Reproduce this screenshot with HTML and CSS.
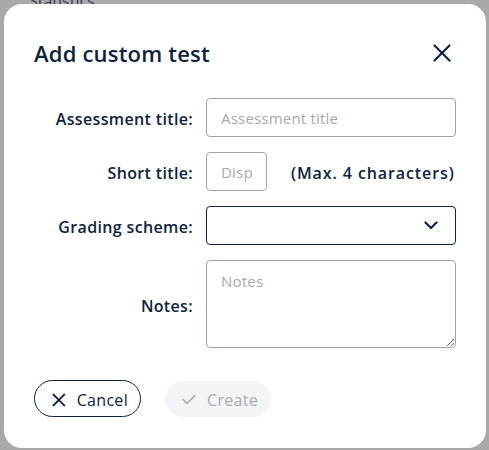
FILE: index.html
```html
<!DOCTYPE html>
<html>
<head>
<meta charset="utf-8">
<link rel="stylesheet" href="styles.css">
</head>
<body>
<div class="backdrop-text">Statistics</div>
<div class="modal">
  <div class="header">
    <h1 class="title">Add custom test</h1>
    <button class="close" aria-label="Close">
      <svg width="18" height="18" viewBox="0 0 18 18"><path d="M1.5 1.5 L16.5 16.5 M16.5 1.5 L1.5 16.5" stroke="#0d2340" stroke-width="2.2" stroke-linecap="round" fill="none"/></svg>
    </button>
  </div>
  <div class="form">
    <label class="label">Assessment title:</label>
    <div class="field"><input class="input" placeholder="Assessment title"></div>

    <label class="label">Short title:</label>
    <div class="field short-row"><input class="input short" placeholder="Display"><span class="hint">(Max. 4 characters)</span></div>

    <label class="label">Grading scheme:</label>
    <div class="field"><div class="select"><svg width="14" height="9" viewBox="0 0 14 9"><path d="M1.5 1.5 L7 7 L12.5 1.5" stroke="#0d2340" stroke-width="2.2" fill="none" stroke-linecap="round" stroke-linejoin="round"/></svg></div></div>

    <label class="label notes-label">Notes:</label>
    <div class="field"><textarea class="textarea" placeholder="Notes"></textarea></div>
  </div>
  <div class="actions">
    <button class="btn cancel">
      <svg width="14" height="14" viewBox="0 0 14 14"><path d="M1.5 1.5 L12.5 12.5 M12.5 1.5 L1.5 12.5" stroke="#0d2340" stroke-width="2" stroke-linecap="round" fill="none"/></svg>
      <span>Cancel</span>
    </button>
    <button class="btn create" disabled>
      <svg width="14" height="11" viewBox="0 0 14 11"><path d="M1 5.5 L5 9.5 L13 1.5" stroke="#a6acb6" stroke-width="1.6" stroke-linecap="round" stroke-linejoin="round" fill="none"/></svg>
      <span>Create</span>
    </button>
  </div>
</div>
</body>
</html>
```

FILE: styles.css
```css
* { box-sizing: border-box; }
html, body { margin: 0; height: 100%; }
body {
  background: #a9a9a9;
  padding: 4px 3px 2px 4px;
  font-family: "Open Sans", "Liberation Sans", sans-serif;
  color: #0d2340;
  position: relative;
  overflow: hidden;
}
.backdrop-text {
  position: absolute;
  top: -10px;
  left: 29px;
  font-size: 16px;
  color: #2d3a52;
}
.modal {
  position: relative;
  background: #fff;
  border-radius: 18px;
  height: 444px;
  padding: 30px 30px 0 30px;
}
.header {
  display: flex;
  align-items: center;
  justify-content: space-between;
  height: 38px;
  margin-bottom: 26px;
}
.title {
  margin: 0;
  font-size: 22px;
  font-weight: 600;
  letter-spacing: 0.2px;
}
.close {
  border: 0;
  background: none;
  padding: 0;
  margin-right: 5px;
  display: flex;
}
.form {
  display: grid;
  grid-template-columns: 159px 1fr;
  column-gap: 13px;
  row-gap: 15px;
}
.label {
  font-size: 16px;
  font-weight: 600;
  letter-spacing: 0.35px;
  text-align: right;
  align-self: center;
  white-space: nowrap;
  padding-top: 3px;
}
.notes-label { padding-top: 4px; }
.field { display: flex; align-items: center; }
.input {
  height: 39px;
  width: 100%;
  border: 1px solid #9aa3b0;
  border-radius: 4px;
  padding: 0 14px;
  font-family: inherit;
  font-size: 15px;
  letter-spacing: 0.2px;
  color: #0d2340;
  outline: none;
}
.input::placeholder, .textarea::placeholder { color: #a3aab5; }
.short-row { gap: 24px; }
.input.short { width: 61px; flex: none; }
.hint { font-size: 16px; font-weight: 600; letter-spacing: 0.9px; white-space: nowrap; padding-top: 3px; }
.select {
  height: 39px;
  width: 100%;
  border: 1px solid #0d2340;
  border-radius: 4px;
  display: flex;
  align-items: center;
  justify-content: flex-end;
  padding-right: 17px;
}
.textarea {
  width: 100%;
  height: 88px;
  border: 1px solid #9aa3b0;
  border-radius: 4px;
  padding: 10px 14px;
  font-family: inherit;
  font-size: 15px;
  letter-spacing: 0.2px;
  resize: vertical;
  outline: none;
  display: block;
}
.actions {
  display: flex;
  gap: 24px;
  margin-top: 32px;
  align-items: center;
}
.btn {
  height: 37px;
  border-radius: 19px;
  display: flex;
  align-items: center;
  gap: 11px;
  font-family: inherit;
  font-size: 16px;
  font-weight: 500;
  letter-spacing: 0.3px;
  padding: 2px 12px 0 17px;
}
.cancel {
  border: 1px solid #0d2340;
  background: #fff;
  color: #0d2340;
  width: 107px;
}
.create {
  border: 0;
  background: #f3f4f6;
  color: #a6acb6;
  width: 106px;
  height: 36px;
}
```
